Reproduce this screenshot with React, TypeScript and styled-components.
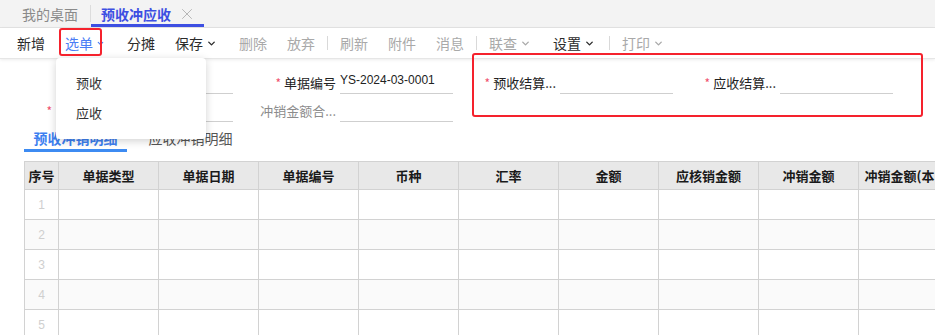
import React from "react";
import styled, { createGlobalStyle } from "styled-components";
import { ChevronDown, X } from "lucide-react";

const GlobalStyle = createGlobalStyle`
  body {
    margin: 0;
    background: #fff;
    font-family: "Noto Sans CJK SC", "Liberation Sans", sans-serif;
    color: #333;
  }
`;

const Page = styled.div`
  position: relative;
  width: 935px;
  height: 335px;
  overflow: hidden;
  background: #fff;
`;

const TabBar = styled.div`
  display: flex;
  align-items: stretch;
  height: 27px;
  padding-left: 10px;
  background: #f3f3f3;
  border-bottom: 1px solid #e3e3e3;
`;

const PageTab = styled.div<{ active?: boolean }>`
  display: flex;
  align-items: center;
  gap: 7px;
  box-sizing: border-box;
  padding: 3px ${({ active }) => (active ? "8px" : "12px")} 0
    ${({ active }) => (active ? "10px" : "12px")};
  font-size: 14px;
  font-weight: ${({ active }) => (active ? 700 : 400)};
  color: ${({ active }) => (active ? "#3d4fe2" : "#8a8a8a")};
  border-bottom: 3px solid ${({ active }) => (active ? "#3d4fe2" : "transparent")};
`;

const TabDivider = styled.div`
  width: 1px;
  margin: 5px 0 5px;
  background: #dcdcdc;
`;

const Toolbar = styled.div`
  display: flex;
  align-items: center;
  height: 30px;
  padding-left: 7px;
  background: #fff;
  border-bottom: 1px solid #e6e6e6;
  box-shadow: 0 1px 3px rgba(0, 0, 0, 0.08);
`;

const ToolButton = styled.div<{ tone?: "normal" | "muted" | "accent"; menu?: boolean }>`
  display: flex;
  align-items: center;
  gap: 3px;
  padding: 0 ${({ menu }) => (menu ? "12px" : "10px")} 0 10px;
  font-size: 14px;
  color: ${({ tone }) =>
    tone === "muted" ? "#a9a9a9" : tone === "accent" ? "#4a7df5" : "#2b2b2b"};
`;

const ToolDivider = styled.div`
  width: 1px;
  height: 14px;
  margin: 0 2px;
  background: #d9d9d9;
`;

const FormGrid = styled.div`
  display: grid;
  grid-template-columns: repeat(4, 201px);
  grid-auto-rows: 24px;
  column-gap: 19px;
  row-gap: 4px;
  padding: 11px 0 0 32px;
`;

const Field = styled.div<{ col: number; row: number }>`
  grid-column: ${({ col }) => col};
  grid-row: ${({ row }) => row};
  display: flex;
  align-items: center;
`;

const Label = styled.div<{ muted?: boolean }>`
  width: 84px;
  margin-right: 4px;
  text-align: right;
  white-space: nowrap;
  overflow: hidden;
  font-size: 13px;
  color: ${({ muted }) => (muted ? "#8c8c8c" : "#222")};
`;

const Required = styled.span<{ gap?: number }>`
  color: #f0506e;
  font-size: 12px;
  margin-right: ${({ gap }) => gap ?? 3}px;
`;

const InputLine = styled.div`
  width: 113px;
  height: 24px;
  box-sizing: border-box;
  border-bottom: 1px solid #cfcfcf;
  font-family: "Liberation Sans", "Noto Sans CJK SC", sans-serif;
  font-size: 12px;
  line-height: 20px;
  color: #222;
  white-space: nowrap;
`;

const SubTabs = styled.div`
  display: flex;
  gap: 12px;
  margin: 5px 0 0 24px;
  height: 25px;
`;

const SubTab = styled.div<{ active?: boolean }>`
  box-sizing: border-box;
  width: 103px;
  text-align: center;
  font-size: 14px;
  line-height: 22px;
  font-weight: ${({ active }) => (active ? 700 : 400)};
  color: ${({ active }) => (active ? "#3d7ff0" : "#555")};
  border-bottom: 3px solid ${({ active }) => (active ? "#3d8bf2" : "transparent")};
`;

const TableWrap = styled.div`
  margin: 9px 0 0 24px;
  overflow: hidden;
`;

const Grid = styled.table`
  border-collapse: collapse;
  table-layout: fixed;
  width: 934px;
`;

const HeadCell = styled.th<{ w: number }>`
  width: ${({ w }) => w}px;
  height: 27px;
  padding: 0;
  background: #e8e8e8;
  border: 1px solid #d2d2d2;
  font-size: 13px;
  font-weight: 700;
  color: #1a1a1a;
  white-space: nowrap;
  overflow: hidden;
  text-align: center;
`;

const BodyRow = styled.tr<{ striped?: boolean }>`
  background: ${({ striped }) => (striped ? "#fafafa" : "#fff")};
`;

const Cell = styled.td`
  height: 29px;
  padding: 0;
  border: 1px solid #d2d2d2;
  text-align: center;
  font-family: "Liberation Sans", sans-serif;
  font-size: 12px;
  color: #cfcfcf;
`;

const Dropdown = styled.div`
  position: absolute;
  left: 56px;
  top: 58px;
  width: 150px;
  height: 81px;
  box-sizing: border-box;
  padding-top: 10px;
  background: #fff;
  border-radius: 4px;
  box-shadow: 0 2px 8px rgba(0, 0, 0, 0.18);
  z-index: 5;
`;

const MenuItem = styled.div`
  height: 30px;
  line-height: 30px;
  padding-left: 20px;
  font-size: 13px;
  color: #333;
`;

const Highlight = styled.div<{ x: number; y: number; w: number; h: number }>`
  position: absolute;
  left: ${({ x }) => x}px;
  top: ${({ y }) => y}px;
  width: ${({ w }) => w}px;
  height: ${({ h }) => h}px;
  box-sizing: border-box;
  border: 2px solid #f5222d;
  border-radius: 3px;
  z-index: 6;
`;

const columns = [
  { title: "序号", w: 33 },
  { title: "单据类型", w: 99 },
  { title: "单据日期", w: 99 },
  { title: "单据编号", w: 99 },
  { title: "币种", w: 99 },
  { title: "汇率", w: 99 },
  { title: "金额", w: 99 },
  { title: "应核销金额", w: 99 },
  { title: "冲销金额", w: 99 },
  { title: "冲销金额(本币)", w: 99 },
];

const fields = [
  { col: 1, row: 1, label: "单据日期" },
  { col: 1, row: 2, label: "客户名称", required: true, gap: 12 },
  { col: 2, row: 1, label: "单据编号", required: true, value: "YS-2024-03-0001" },
  { col: 2, row: 2, label: "冲销金额合...", muted: true },
  { col: 3, row: 1, label: "预收结算...", required: true },
  { col: 4, row: 1, label: "应收结算...", required: true },
];

export default function App() {
  return (
    <Page>
      <GlobalStyle />
      <TabBar>
        <PageTab>我的桌面</PageTab>
        <TabDivider />
        <PageTab active>
          预收冲应收
          <X size={18} strokeWidth={1.3} color="#b5b5b5" />
        </PageTab>
      </TabBar>

      <Toolbar>
        <ToolButton>新增</ToolButton>
        <ToolButton tone="accent" menu>
          选单
          <ChevronDown size={9} strokeWidth={3} />
        </ToolButton>
        <ToolButton>分摊</ToolButton>
        <ToolButton menu>
          保存
          <ChevronDown size={11} strokeWidth={3} />
        </ToolButton>
        <ToolButton tone="muted">删除</ToolButton>
        <ToolButton tone="muted">放弃</ToolButton>
        <ToolDivider />
        <ToolButton tone="muted">刷新</ToolButton>
        <ToolButton tone="muted">附件</ToolButton>
        <ToolButton tone="muted">消息</ToolButton>
        <ToolDivider />
        <ToolButton tone="muted" menu>
          联查
          <ChevronDown size={11} strokeWidth={3} />
        </ToolButton>
        <ToolButton menu>
          设置
          <ChevronDown size={11} strokeWidth={3} />
        </ToolButton>
        <ToolDivider />
        <ToolButton tone="muted" menu>
          打印
          <ChevronDown size={11} strokeWidth={3} />
        </ToolButton>
      </Toolbar>

      <FormGrid>
        {fields.map((f) => (
          <Field key={f.label} col={f.col} row={f.row}>
            <Label muted={f.muted}>
              {f.required && <Required gap={f.gap}>*</Required>}
              {f.label}
            </Label>
            <InputLine>{f.value}</InputLine>
          </Field>
        ))}
      </FormGrid>

      <SubTabs>
        <SubTab active>预收冲销明细</SubTab>
        <SubTab>应收冲销明细</SubTab>
      </SubTabs>

      <TableWrap>
        <Grid>
          <thead>
            <tr>
              {columns.map((c) => (
                <HeadCell key={c.title} w={c.w}>
                  {c.title}
                </HeadCell>
              ))}
            </tr>
          </thead>
          <tbody>
            {[1, 2, 3, 4, 5].map((n) => (
              <BodyRow key={n} striped={n % 2 === 0}>
                {columns.map((c, i) => (
                  <Cell key={c.title}>{i === 0 ? n : ""}</Cell>
                ))}
              </BodyRow>
            ))}
          </tbody>
        </Grid>
      </TableWrap>

      <Dropdown>
        <MenuItem>预收</MenuItem>
        <MenuItem>应收</MenuItem>
      </Dropdown>

      <Highlight x={59} y={28} w={43} h={28} />
      <Highlight x={472} y={53} w={451} h={64} />
    </Page>
  );
}
